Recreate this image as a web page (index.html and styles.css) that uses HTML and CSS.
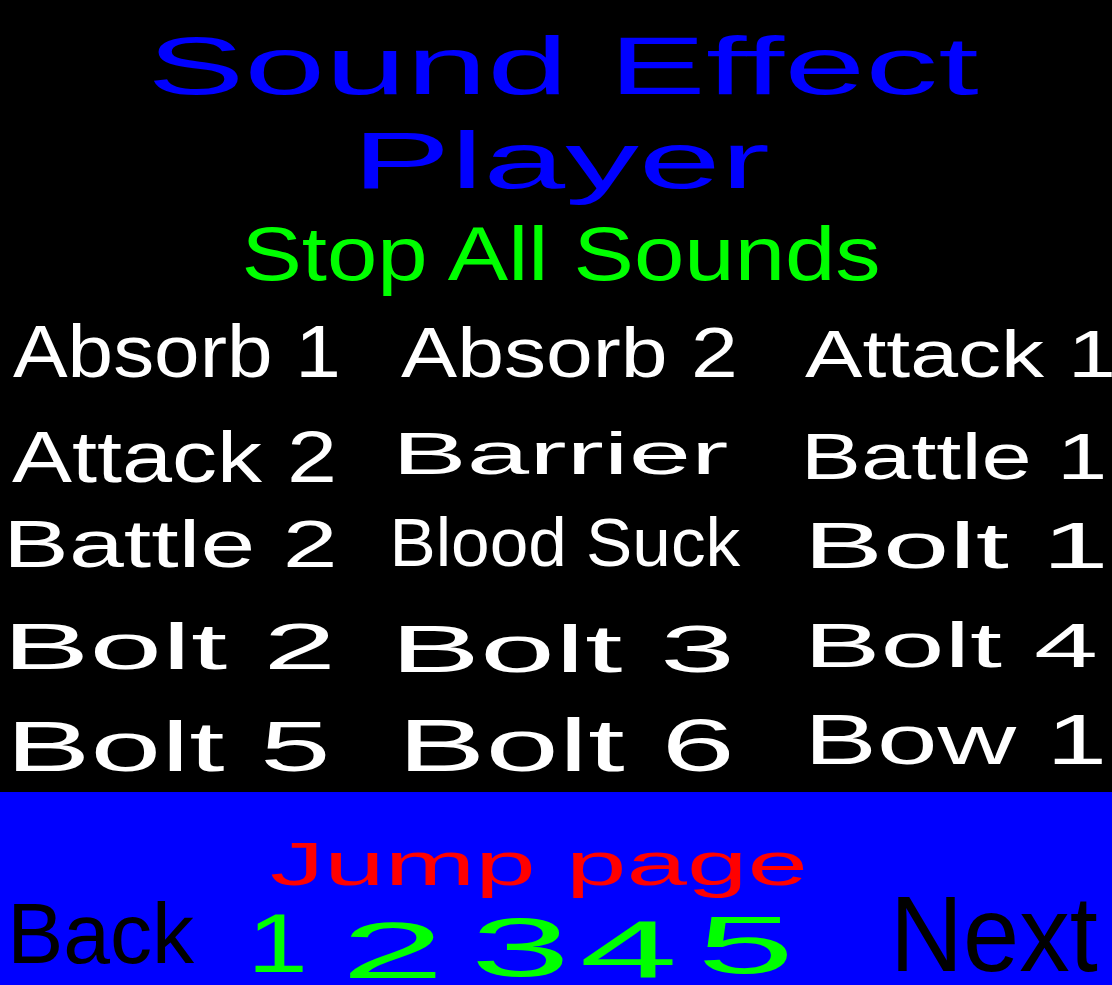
FILE: index.html
```html
<!DOCTYPE html>
<html lang="en">
<head>
  <meta charset="UTF-8">
  <meta name="viewport" content="width=device-width, initial-scale=1.0">
  <title>Sound Effect Player</title>
  <link rel="stylesheet" href="styles.css">
</head>
<body>
<div class="screen">
  <header class="top">
    <h1 class="title">
      <span class="fit line-1" data-box="153 35 826 60"><span>Sound Effect</span></span>
      <span class="fit line-2" data-box="364 19 404 58"><span>Player</span></span>
    </h1>
    <button class="fit stop" data-box="245 17 638 56" onclick="stopAll()"><span>Stop All Sounds</span></button>
  </header>

  <div class="sounds">
    <button class="fit sfx" data-box="13 18 324 54"><span>Absorb 1</span></button>
    <button class="fit sfx" data-box="30 20 333 52"><span>Absorb 2</span></button>
    <button class="fit sfx" data-box="63 23 307 49"><span>Attack 1</span></button>
    <button class="fit sfx" data-box="12 28 321 53"><span>Attack 2</span></button>
    <button class="fit sfx" data-box="30 30 326 43"><span>Barrier</span></button>
    <button class="fit sfx" data-box="66 31 295 47"><span>Battle 1</span></button>
    <button class="fit sfx" data-box="11 21 322 48"><span>Battle 2</span></button>
    <button class="fit sfx" data-box="24 18 346 50"><span>Blood Suck</span></button>
    <button class="fit sfx" data-box="71 23 290 47"><span>Bolt 1</span></button>
    <button class="fit sfx" data-box="13 26 317 47"><span>Bolt 2</span></button>
    <button class="fit sfx" data-box="30 28 329 48"><span>Bolt 3</span></button>
    <button class="fit sfx" data-box="71 25 282 46"><span>Bolt 4</span></button>
    <button class="fit sfx" data-box="16 26 310 52"><span>Bolt 5</span></button>
    <button class="fit sfx" data-box="37 24 322 54"><span>Bolt 6</span></button>
    <button class="fit sfx" data-box="71 23 289 48"><span>Bow 1</span></button>
  </div>

  <footer class="pager">
    <div class="fit jump" data-box="271 52 533 42"><span>Jump page</span></div>
    <nav class="nav">
      <button class="fit step" data-box="14 10 181 62"><span>Back</span></button>
      <button class="fit page" data-box="15 24 48 57"><span>1</span></button>
      <button class="fit page" data-box="-6 30 86 56"><span>2</span></button>
      <button class="fit page" data-box="4 26 88 59"><span>3</span></button>
      <button class="fit page" data-box="-5 29 90 57"><span>4</span></button>
      <button class="fit page" data-box="0 26 84 56"><span>5</span></button>
      <button class="fit step" data-box="78 6 200 74"><span>Next</span></button>
    </nav>
  </footer>
</div>

<script>
  // every label is stretched to fill its box: data-box = "left top width height" of the ink
  const ctx = document.createElement('canvas').getContext('2d');
  ctx.font = '100px "Liberation Sans"';

  function fitLabels() {
    const cells = [...document.querySelectorAll('.fit')];

    // first pass: sizes only, so the layout settles before anything is measured
    const fits = cells.map(cell => {
      const [x, y, w, h] = cell.dataset.box.split(' ').map(Number);
      const label = cell.querySelector('span');
      const m = ctx.measureText(label.textContent);
      const size = h / m.actualBoundingBoxAscent * 100;
      label.style.fontSize = size + 'px';
      label.style.transform = 'none';
      return { cell, label, m, size, x, y, w, h };
    });

    fits.forEach(({ cell, label, m, size, x, y, w, h }) => {
      const k = size / 100;
      const inkLeft = -m.actualBoundingBoxLeft * k;
      const inkWidth = (m.actualBoundingBoxLeft + m.actualBoundingBoxRight) * k;
      const lineBox = (m.fontBoundingBoxAscent + m.fontBoundingBoxDescent) * k;
      const baseline = (size - lineBox) / 2 + m.fontBoundingBoxAscent * k;
      const sx = w / inkWidth;
      const c = cell.getBoundingClientRect();
      const l = label.getBoundingClientRect();
      const tx = x - inkLeft * sx - (l.left - c.left);
      const ty = y - (baseline - h) - (l.top - c.top);
      label.style.transform = `translate(${tx}px, ${ty}px) scaleX(${sx})`;
    });
  }

  function stopAll() {
    document.querySelectorAll('audio').forEach(a => { a.pause(); a.currentTime = 0; });
  }

  fitLabels();
</script>
</body>
</html>
```

FILE: styles.css
```css
* {
  box-sizing: border-box;
}
body {
  margin: 0;
  background: #000;
  font-family: "Liberation Sans", Arial, sans-serif;
  overflow: hidden;
}
.screen {
  width: 1112px;
  height: 985px;
  display: flex;
  flex-direction: column;
  overflow: hidden;
}
.title {
  margin: 0;
  font-size: 16px;
  font-weight: normal;
  color: #0000ff;
}
.fit {
  display: block;
  width: 100%;
  margin: 0;
  padding: 0;
  border: 0;
  background: none;
  font: inherit;
  color: inherit;
  text-align: left;
  overflow: visible;
  cursor: pointer;
}
.fit span {
  display: block;
  width: max-content;
  line-height: 1;
  white-space: nowrap;
  transform-origin: 0 0;
}
.line-1 {
  height: 112px;
}
.line-2 {
  height: 96px;
}
.stop {
  height: 97px;
  color: #00ff00;
}
.sounds {
  display: grid;
  grid-template-columns: 371px 371px 370px;
  grid-template-rows: 97px 97px 98px 97px 98px;
}
.sfx {
  height: 100%;
  color: #fff;
}
.pager {
  flex: 1;
  background: #0000ff;
}
.jump {
  height: 100px;
  color: #ff0000;
}
.nav {
  display: grid;
  grid-template-columns: 240px repeat(5, 116px) 1fr;
  grid-template-rows: 93px;
  height: 93px;
}
.step {
  height: 100%;
  color: #000;
}
.page {
  height: 100%;
  color: #00ff00;
}
```
